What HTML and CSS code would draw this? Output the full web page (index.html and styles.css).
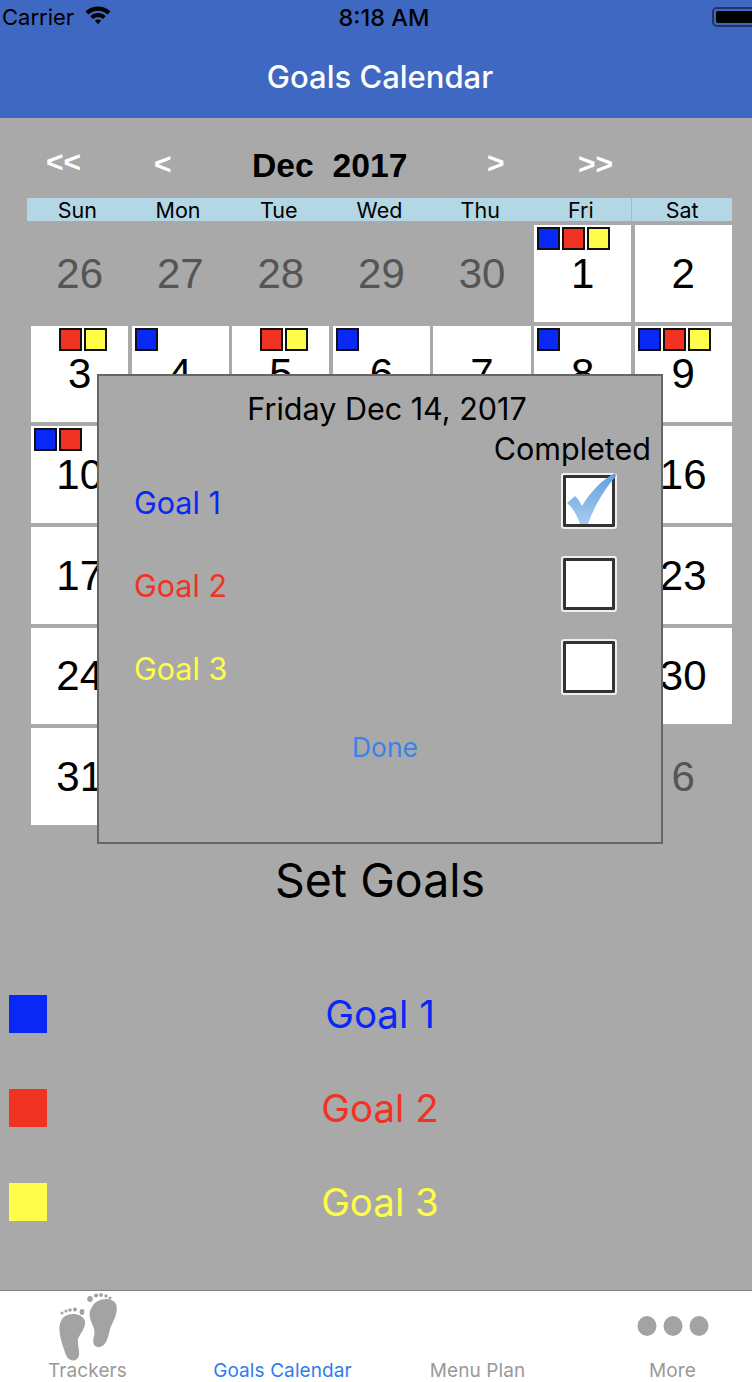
FILE: index.html
```html
<!DOCTYPE html>
<html lang="en">
<head>
  <meta charset="UTF-8">
  <meta name="viewport" content="width=device-width, initial-scale=1.0">
  <title>Goals Calendar</title>
  <link rel="stylesheet" href="styles.css">
</head>
<body>
  <div class="screen">
    <header class="topbar">
      <div class="status">
        <div class="carrier">
          <span>Carrier</span>
          <svg class="wifi" width="26" height="20" viewBox="0 0 26 20">
            <path d="M0.5 6.5 A18 18 0 0 1 25.5 6.5 L22.6 9.5 A14 14 0 0 0 3.4 9.5 Z" fill="#000"/>
            <path d="M5.3 11.2 A11 11 0 0 1 20.7 11.2 L17.9 14 A7 7 0 0 0 8.1 14 Z" fill="#000"/>
            <path d="M10 15.8 A4.5 4.5 0 0 1 16 15.8 L13 19.2 Z" fill="#000"/>
          </svg>
        </div>
        <div class="clock">8:18 AM</div>
        <div class="battery"><div class="battery-fill"></div></div>
      </div>
      <h1 class="title">Goals Calendar</h1>
    </header>

    <main class="content">
      <div class="month-nav">
        <span class="arrow low">&lt;&lt;</span>
        <span class="arrow low">&lt;</span>
        <span class="month">Dec  2017</span>
        <span class="arrow">&gt;</span>
        <span class="arrow low">&gt;&gt;</span>
      </div>

      <div class="weekdays">
        <span>Sun</span><span>Mon</span><span>Tue</span><span>Wed</span><span>Thu</span><span>Fri</span><span class="sat">Sat</span>
      </div>

      <div class="days">
        <div class="day other">26</div>
        <div class="day other">27</div>
        <div class="day other">28</div>
        <div class="day other">29</div>
        <div class="day other">30</div>
        <div class="day"><div class="marks"><i class="mark blue"></i><i class="mark red"></i><i class="mark yellow"></i></div>1</div>
        <div class="day">2</div>

        <div class="day"><div class="marks"><i class="mark none"></i><i class="mark red"></i><i class="mark yellow"></i></div>3</div>
        <div class="day"><div class="marks"><i class="mark blue"></i></div>4</div>
        <div class="day"><div class="marks"><i class="mark none"></i><i class="mark red"></i><i class="mark yellow"></i></div>5</div>
        <div class="day"><div class="marks"><i class="mark blue"></i></div>6</div>
        <div class="day">7</div>
        <div class="day"><div class="marks"><i class="mark blue"></i></div>8</div>
        <div class="day"><div class="marks"><i class="mark blue"></i><i class="mark red"></i><i class="mark yellow"></i></div>9</div>

        <div class="day"><div class="marks"><i class="mark blue"></i><i class="mark red"></i></div>10</div>
        <div class="day"></div>
        <div class="day"></div>
        <div class="day"></div>
        <div class="day"></div>
        <div class="day"></div>
        <div class="day">16</div>

        <div class="day">17</div>
        <div class="day"></div>
        <div class="day"></div>
        <div class="day"></div>
        <div class="day"></div>
        <div class="day"></div>
        <div class="day">23</div>

        <div class="day">24</div>
        <div class="day"></div>
        <div class="day"></div>
        <div class="day"></div>
        <div class="day"></div>
        <div class="day"></div>
        <div class="day">30</div>

        <div class="day">31</div>
        <div class="day other"></div>
        <div class="day other"></div>
        <div class="day other"></div>
        <div class="day other"></div>
        <div class="day other"></div>
        <div class="day other">6</div>
      </div>

      <h2 class="set-goals">Set Goals</h2>

      <div class="goal-list">
        <div class="goal-row"><i class="swatch blue"></i><span class="goal-name text-blue">Goal 1</span></div>
        <div class="goal-row"><i class="swatch red"></i><span class="goal-name text-red">Goal 2</span></div>
        <div class="goal-row"><i class="swatch yellow"></i><span class="goal-name text-yellow">Goal 3</span></div>
      </div>
    </main>

    <nav class="tabbar">
      <div class="tab">
        <svg class="tab-icon feet" width="64" height="72" viewBox="0 0 64 72">
          <g fill="#a3a3a3">
            <path d="M7 28 C12 21 27 21 30 30 C31 37 25 43 23 48 C22 54 26 62 23 67 C20 71 13 70 11 64 C7 53 1 37 7 28 Z"/>
            <path d="M37 16 C41 7 57 5 61 13 C64 21 58 30 55 38 C53 46 52 54 45 56 C39 57 37 52 39 45 C41 38 36 32 35 27 C34 22 35 19 37 16 Z"/>
            <circle cx="7" cy="22" r="1.5"/><circle cx="11" cy="20" r="1.6"/><circle cx="15" cy="19" r="1.8"/><circle cx="20" cy="18.5" r="2"/><ellipse cx="27" cy="21" rx="2.4" ry="3"/>
            <ellipse cx="35" cy="8" rx="2.8" ry="3"/><circle cx="41" cy="4.5" r="2.1"/><circle cx="46" cy="4" r="1.9"/><circle cx="51" cy="5" r="1.7"/><circle cx="55" cy="7" r="1.5"/>
          </g>
        </svg>
        <span class="tab-label">Trackers</span>
      </div>
      <div class="tab">
        <span class="tab-label active">Goals Calendar</span>
      </div>
      <div class="tab">
        <span class="tab-label">Menu Plan</span>
      </div>
      <div class="tab">
        <svg class="tab-icon" width="72" height="70" viewBox="0 0 72 70">
          <g fill="#a3a3a3">
            <ellipse cx="10" cy="35" rx="9.5" ry="10"/>
            <ellipse cx="36" cy="35" rx="9.5" ry="10"/>
            <ellipse cx="62" cy="35" rx="9.5" ry="10"/>
          </g>
        </svg>
        <span class="tab-label">More</span>
      </div>
    </nav>

    <section class="popup">
      <div class="popup-date">Friday Dec 14, 2017</div>
      <div class="popup-head">Completed</div>
      <div class="popup-row">
        <span class="text-blue">Goal 1</span>
        <div class="checkbox">
          <svg class="check" width="56" height="56" viewBox="0 0 56 56">
            <defs>
              <linearGradient id="tick" x1="0" y1="0" x2="0" y2="1">
                <stop offset="0" stop-color="#5f9fe4"/>
                <stop offset="1" stop-color="#a9cbec"/>
              </linearGradient>
            </defs>
            <path d="M6 30 L14 23 C17 26 19 29 21 33 C28 21 40 7 54 0 L55 3 C44 16 33 33 27 51 L19 51 C16 42 12 35 6 30 Z" fill="url(#tick)"/>
          </svg>
        </div>
      </div>
      <div class="popup-row">
        <span class="text-red">Goal 2</span>
        <div class="checkbox"></div>
      </div>
      <div class="popup-row">
        <span class="text-yellow">Goal 3</span>
        <div class="checkbox"></div>
      </div>
      <div class="done">Done</div>
    </section>
  </div>
</body>
</html>
```

FILE: styles.css
```css
html, body {
  margin: 0;
  padding: 0;
  width: 752px;
  height: 1382px;
  overflow: hidden;
}
body {
  font-family: Inter, "Noto Sans", sans-serif;
  background-color: #a9a9a9;
  color: #000;
}
.screen {
  position: relative;
  width: 760px;
  height: 1382px;
  display: flex;
  flex-direction: column;
}

/* top bar */
.topbar {
  height: 118px;
  background-color: #3e68c2;
  flex: none;
}
.status {
  height: 34px;
  display: grid;
  grid-template-columns: 1fr auto 1fr;
  align-items: center;
  font-size: 22px;
  font-weight: 400;
}
.carrier {
  display: flex;
  align-items: center;
  gap: 11px;
  padding-left: 2px;
}
.wifi {
  margin-top: -5px;
}
.clock {
  font-size: 23.5px;
  font-weight: 500;
  margin-left: 8px;
}
.battery {
  justify-self: end;
  width: 48px;
  height: 20px;
  border: 2px solid #23355f;
  border-radius: 5px;
  padding: 2px;
  box-sizing: border-box;
}
.battery-fill {
  height: 100%;
  background: #000;
  border-radius: 2px;
}
.title {
  margin: 23px 0 0;
  font-size: 31px;
  line-height: 40px;
  font-weight: 500;
  color: #fff;
  text-align: center;
}

/* calendar */
.content {
  flex: 1;
}
.month-nav {
  margin: 26px 0 0 46px;
  height: 42px;
  display: grid;
  grid-template-columns: 108px 98px 235px 91px auto;
  align-items: center;
  font-family: "Liberation Sans", Arial, sans-serif;
  font-weight: bold;
}
.arrow {
  color: #fff;
  font-size: 30px;
  line-height: 30px;
  margin-top: -5px;
}
.arrow.low {
  margin-top: -2px;
}
.month-nav .arrow:first-child {
  margin-top: -6px;
}
.month {
  font-size: 33.7px;
  white-space: pre;
  color: #000;
}
.weekdays {
  width: 705px;
  height: 23px;
  margin: 12px 0 0 27px;
  background-color: #b3d7e4;
  display: grid;
  grid-template-columns: repeat(7, 1fr);
  font-size: 21.5px;
  line-height: 24px;
  text-align: center;
}
.sat {
  border-left: 1px solid #a9b9c0;
}
.days {
  width: 701px;
  height: 600px;
  margin: 4px 0 0 31px;
  display: grid;
  grid-template-columns: repeat(7, 97.3px);
  grid-template-rows: repeat(6, 1fr);
  gap: 4px 3.3px;
}
.day {
  position: relative;
  background: #fff;
  display: flex;
  align-items: center;
  justify-content: center;
  padding-top: 1px;
  font-family: "Liberation Sans", Arial, sans-serif;
  font-size: 42px;
}
.day.other {
  background: transparent;
  color: #555;
}
.marks {
  position: absolute;
  top: 2px;
  left: 3px;
  display: flex;
  gap: 2px;
}
.mark {
  display: block;
  width: 23px;
  height: 23px;
  box-sizing: border-box;
  border: 2px solid #111;
}
.mark.none {
  visibility: hidden;
}
.blue { background-color: #0a28f5; }
.red { background-color: #f03323; }
.yellow { background-color: #fffc4a; }
.text-blue { color: #0a28f5; }
.text-red { color: #f03323; }
.text-yellow { color: #fffc4a; }

/* goals */
.set-goals {
  margin: 27px 0 0;
  font-size: 46.5px;
  line-height: 56px;
  font-weight: 400;
  text-align: center;
}
.goal-list {
  margin-top: 87px;
  display: flex;
  flex-direction: column;
  gap: 56px;
}
.goal-row {
  position: relative;
  height: 38px;
  display: flex;
  align-items: center;
  justify-content: center;
}
.swatch {
  position: absolute;
  left: 9px;
  top: 0;
  width: 38px;
  height: 38px;
}
.goal-name {
  font-size: 38.5px;
}

/* tabs */
.tabbar {
  flex: none;
  height: 92px;
  box-sizing: border-box;
  background: #fff;
  border-top: 1px solid #808080;
  display: flex;
  justify-content: center;
}
.tab {
  position: relative;
  flex: none;
  width: 195px;
  display: flex;
  flex-direction: column;
  align-items: center;
  justify-content: flex-end;
}
.tab-icon {
  position: absolute;
  top: 0;
  filter: blur(0.5px);
}
.tab-icon.feet {
  margin-left: -1px;
}
.tab-label {
  font-size: 19px;
  line-height: 22px;
  font-weight: 400;
  letter-spacing: 0.1px;
  color: #999;
}
.tab-label.active {
  color: #2f7cf0;
}

/* popup */
.popup {
  position: absolute;
  left: 97px;
  top: 374px;
  width: 566px;
  height: 470px;
  box-sizing: border-box;
  background-color: #a9a9a9;
  border: 2px solid #666;
  font-size: 30.5px;
}
.popup-date {
  text-align: center;
  margin-top: 15px;
  line-height: 36px;
  padding-left: 14px;
}
.popup-head {
  text-align: right;
  margin-top: 4px;
  padding-right: 10px;
  line-height: 36px;
}
.popup-row {
  height: 56px;
  margin: 6px 44px 27px 35px;
  display: flex;
  align-items: center;
  justify-content: space-between;
}
.popup-row + .popup-row {
  margin-top: 0;
}
.popup-row span {
  padding-top: 2px;
}
.checkbox {
  position: relative;
  width: 56px;
  height: 56px;
  box-sizing: border-box;
  background: #fff;
  border: 2px solid #efefef;
  box-shadow: inset 0 0 0 3px #333;
  border-radius: 3px;
}
.check {
  position: absolute;
  left: -2px;
  top: -2px;
}
.done {
  text-align: center;
  color: #3a82e8;
  font-size: 26.5px;
  line-height: 36px;
  margin-top: 34px;
  padding-left: 10px;
}
```
